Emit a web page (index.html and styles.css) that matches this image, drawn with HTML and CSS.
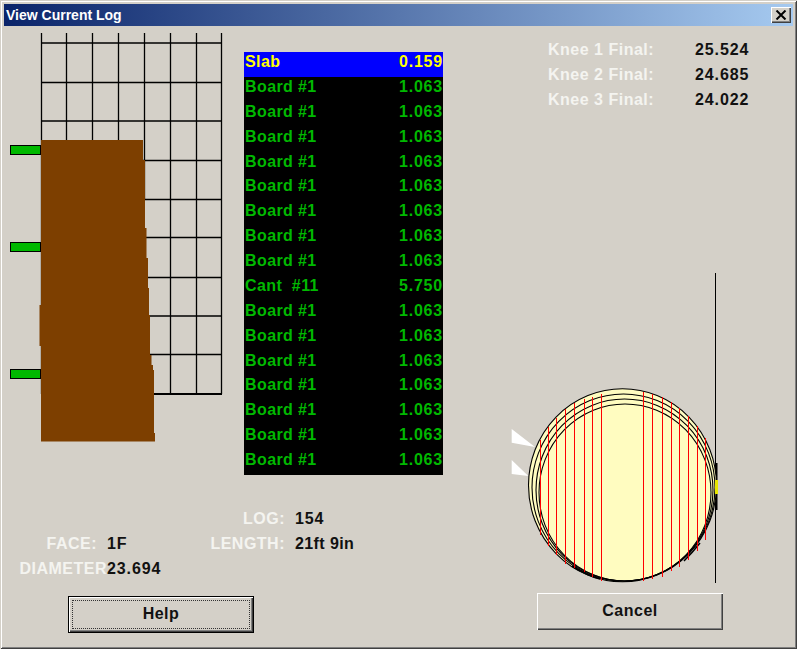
FILE: index.html
```html
<!DOCTYPE html>
<html lang="en">
<head>
  <meta charset="UTF-8" />
  <title>View Current Log</title>
  <link rel="stylesheet" href="styles.css">
</head>
<body>

<div class="window">
  <div class="titlebar">
    <span class="title">View Current Log</span>
    <button class="close" aria-label="Close">
      <svg width="12" height="10" viewBox="0 0 12 10"><path d="M1.500 .5l9 9M10.500 .5l-9 9" fill="none" stroke="#000" stroke-width="2"/></svg>
    </button>
  </div>

  <div class="content">
    <div class="left">
      <div class="top">
        <svg class="diagram" width="244" height="450" viewBox="0 26 244 450">
          <g stroke="#000" stroke-width="1.300">
            <path d="M41.500 33V394M66.500 33V394M92.500 33V394M118.500 33V394M144.500 33V199M170.500 33V394M196.500 33V394M221.500 33V394"/>
            <path d="M41 43H222M41 82.500H222M41 121H222M41 160.500H222M41 199.500H222M41 237.500H222M41 277.500H222M41 316H222M41 354.500H222"/>
            <path d="M144 394H222" stroke-width="2"/>
          </g>
          <polygon fill="#7d3f00" points="41,140 143,140 143,160 145,160 145,228 146.500,228 146.500,258 148,258 148,288 149,288 149,315 150,315 150,355 151.500,355 151.500,365 153,365 153,370 154,370 154,433 155,433 155,441.500 41,441.500 41,346 39.500,346 39.500,305 41,305"/>
          <g fill="#00b800" stroke="#000" shape-rendering="crispEdges">
            <rect x="10.500" y="145.500" width="30" height="9"/>
            <rect x="10.500" y="242.500" width="30" height="9"/>
            <rect x="10.500" y="369.500" width="30" height="9"/>
          </g>
        </svg>

        <ul class="cuts">
          <li class="selected"><span>Slab</span><span class="size">0.159</span></li>
          <li><span>Board #1</span><span class="size">1.063</span></li>
          <li><span>Board #1</span><span class="size">1.063</span></li>
          <li><span>Board #1</span><span class="size">1.063</span></li>
          <li><span>Board #1</span><span class="size">1.063</span></li>
          <li><span>Board #1</span><span class="size">1.063</span></li>
          <li><span>Board #1</span><span class="size">1.063</span></li>
          <li><span>Board #1</span><span class="size">1.063</span></li>
          <li><span>Board #1</span><span class="size">1.063</span></li>
          <li><span>Cant  #11</span><span class="size">5.750</span></li>
          <li><span>Board #1</span><span class="size">1.063</span></li>
          <li><span>Board #1</span><span class="size">1.063</span></li>
          <li><span>Board #1</span><span class="size">1.063</span></li>
          <li><span>Board #1</span><span class="size">1.063</span></li>
          <li><span>Board #1</span><span class="size">1.063</span></li>
          <li><span>Board #1</span><span class="size">1.063</span></li>
          <li><span>Board #1</span><span class="size">1.063</span></li>
        </ul>
      </div>

      <div class="details">
        <div class="info info-face">
          <span class="label">FACE:</span><span class="value">1F</span>
          <span class="label label-tight">DIAMETER</span><span class="value">23.694</span>
        </div>
        <div class="info info-log">
          <span class="label">LOG:</span><span class="value">154</span>
          <span class="label">LENGTH:</span><span class="value value-text">21ft 9in</span>
        </div>
      </div>

      <button class="btn btn-help"><span class="focus">Help</span></button>
    </div>

    <div class="right">
      <div class="knees">
        <span class="label">Knee 1 Final:</span><span class="value">25.524</span>
        <span class="label">Knee 2 Final:</span><span class="value">24.685</span>
        <span class="label">Knee 3 Final:</span><span class="value">24.022</span>
      </div>

      <svg class="section" width="240" height="325" viewBox="490 265 240 325">
        <path d="M715.500 273V583" stroke="#000" fill="none"/>
        <path d="M716 463h1.500v47H716z" fill="#000"/>
        <g fill="#fffcc0" stroke="#000" stroke-width="1.100">
          <ellipse cx="622.500" cy="485.300" rx="94" ry="96.500"/>
          <ellipse cx="623.500" cy="487.500" rx="91.500" ry="93.500" fill="none"/>
          <ellipse cx="624.500" cy="490" rx="88.500" ry="91" fill="none"/>
          <ellipse cx="625" cy="492.500" rx="86" ry="88.500" fill="none"/>
        </g>
        <path d="M572 566q14 9 28 13M700 543q-8 10-16 18" fill="none" stroke="#000" stroke-width="1.500"/>
        <g stroke="#f00" stroke-width="1" fill="none">
          <path d="M540.500 440V535M548.500 427V546M556.500 418V555M565.500 409V564M574.500 403V568M584.500 399V572M592.500 397V577M601.500 394V581"/>
          <path d="M643.500 392V581M652.500 394V579M662.500 397V577M671.500 402V571M679.500 408V567M688.500 416V560M697.500 426V551M705.500 438V540"/>
        </g>
        <rect x="715" y="480" width="3" height="14" fill="#e6e600"/>
        <g fill="#fff">
          <polygon points="511.700,429 535,447 511.700,442.700"/>
          <polygon points="511.700,460 528.300,476 511.700,474"/>
        </g>
      </svg>

      <button class="btn btn-cancel">Cancel</button>
    </div>
  </div>
</div>

</body>
</html>
```

FILE: styles.css
```css
html, body {
  margin: 0;
  padding: 0;
  height: 100%;
  overflow: hidden;
}
body {
  font-family: "Liberation Sans", Arial, sans-serif;
  background: #d4d0c8;
}
.window {
  box-sizing: border-box;
  width: 797px;
  height: 649px;
  padding-top: 4px;
  background: #d4d0c8;
  box-shadow: inset 1px 1px #d4d0c8, inset -1px -1px #404040, inset 2px 2px #fff, inset -2px -2px #808080;
}
.titlebar {
  display: flex;
  align-items: center;
  justify-content: space-between;
  height: 22px;
  margin: 0 4px;
  padding: 0 2px;
  background: linear-gradient(to right, #0a246a, #a6caf0);
}
.title {
  color: white;
  font-size: 14px;
  font-weight: bold;
}
.close {
  display: flex;
  align-items: center;
  justify-content: center;
  box-sizing: border-box;
  width: 20px;
  height: 16px;
  padding: 0;
  background: #d4d0c8;
  border: none;
  box-shadow: inset 1px 1px #fff, inset -1px -1px #404040, inset -2px -2px #808080;
}
.content {
  display: flex;
}
.left {
  width: 490px;
}
.top {
  display: flex;
  height: 450px;
}
.diagram, .section {
  display: block;
}
.cuts {
  width: 199px;
  height: 423px;
  margin: 26px 0 0;
  padding: 0;
  list-style: none;
  background: black;
  color: #00b800;
  font-size: 16px;
  font-weight: bold;
  letter-spacing: 0.4px;
}
.cuts li {
  display: flex;
  justify-content: space-between;
  height: 24.875px;
  padding: 1px 0 0 1px;
  box-sizing: border-box;
  white-space: pre;
}
.cuts .size {
  letter-spacing: 0.8px;
}
.cuts .selected {
  background: #0000ff;
  color: #ffff00;
}
.details {
  display: flex;
  padding-top: 30px;
}
.info {
  display: grid;
  grid-auto-rows: 25px;
  align-items: center;
}
.info-face {
  grid-template-columns: 107px auto;
  width: 204px;
  margin-top: 25px;
}
.info-log {
  grid-template-columns: 91px auto;
}
.label, .value {
  font-size: 16px;
  font-weight: bold;
  letter-spacing: 0.5px;
  white-space: nowrap;
}
.label {
  color: #f4f4f0;
}
.info .label {
  text-align: right;
  padding-right: 10px;
}
.info .label-tight {
  padding-right: 0;
}
.value {
  color: #111;
  letter-spacing: 0.9px;
}
.value-text {
  letter-spacing: 0.4px;
}
.knees {
  display: grid;
  grid-template-columns: 147px auto;
  grid-auto-rows: 25px;
  align-items: center;
  margin: 11px 0 153px 58px;
}
.btn {
  display: block;
  box-sizing: border-box;
  width: 186px;
  height: 37px;
  padding: 0 0 2px;
  background: #d4d0c8;
  border: none;
  color: #111;
  font-family: inherit;
  font-size: 16px;
  font-weight: bold;
  letter-spacing: 0.5px;
}
.btn-help {
  margin: 15px 0 0 68px;
  padding: 3px;
  border: 1px solid black;
  box-shadow: inset 1px 1px #fff, inset -1px -1px #404040, inset -2px -2px #808080;
}
.focus {
  display: flex;
  align-items: center;
  justify-content: center;
  height: 100%;
  box-sizing: border-box;
  padding-bottom: 1px;
  border: 1px dotted #333;
}
.btn-cancel {
  margin: 3px 0 0 47px;
  box-shadow: inset 1px 1px #fff, inset -1px -1px #404040, inset -2px -2px #808080;
}
```
